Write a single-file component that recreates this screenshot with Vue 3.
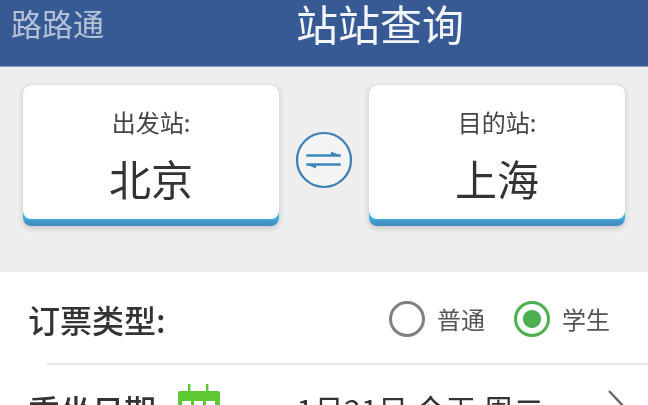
<template>
  <div class="page">
    <header class="topbar">
      <span class="brand">路路通</span>
      <h1 class="title">站站查询</h1>
    </header>

    <section class="stations">
      <div class="station">
        <div class="station-face">
          <span class="station-label">出发站:</span>
          <span class="station-name">北京</span>
        </div>
      </div>
      <button class="swap" aria-label="交换">
        <svg width="58" height="58" viewBox="0 0 58 58" fill="none">
          <circle cx="29" cy="29" r="27" fill="#f4f4f4" stroke="#3b7fb4" stroke-width="2.2" />
          <path d="M12 24H45V25H12Z" fill="#3a86bd" stroke="#3a86bd" stroke-width="1.4" />
          <path d="M36 20.5L45.5 24.5H36Z" fill="#3a86bd" />
          <path d="M12 33H45V34H12Z" fill="#3a86bd" stroke="#3a86bd" stroke-width="1.4" />
          <path d="M21 37.5L11.5 33.5H21Z" fill="#3a86bd" />
        </svg>
      </button>
      <div class="station">
        <div class="station-face">
          <span class="station-label">目的站:</span>
          <span class="station-name">上海</span>
        </div>
      </div>
    </section>

    <section class="panel">
      <div class="row type-row">
        <span class="row-label">订票类型:</span>
        <div class="radios">
          <label
            v-for="t in ticketTypes"
            :key="t"
            class="radio"
            :class="{ checked: selectedType === t }"
            @click="selectedType = t"
          >
            <span class="radio-dot"></span>
            <span class="radio-text">{{ t }}</span>
          </label>
        </div>
      </div>
      <div class="row date-row">
        <span class="row-label">乘坐日期:</span>
        <svg class="calendar" width="44" height="34" viewBox="0 0 44 34">
          <rect x="1" y="7" width="42" height="27" rx="2" fill="#5ec832" />
          <rect x="11" y="0" width="2.4" height="11" fill="#5ec832" />
          <rect x="29" y="0" width="2.4" height="11" fill="#5ec832" />
          <rect x="5" y="17" width="9" height="8" fill="#fff" />
          <rect x="17" y="17" width="9" height="8" fill="#fff" />
          <rect x="29" y="17" width="9" height="8" fill="#fff" />
        </svg>
        <span class="date-value">1月21日 今天 周二</span>
        <svg class="chevron" width="22" height="40" viewBox="0 0 22 40" fill="none">
          <path d="M3 2L20 20L3 38" stroke="#666" stroke-width="2.4" />
        </svg>
      </div>
    </section>
  </div>
</template>

<script setup>
import { ref } from 'vue'

const ticketTypes = ['普通', '学生']
const selectedType = ref('学生')
</script>

<style scoped>
.page {
  width: 648px;
  height: 405px;
  overflow: hidden;
  background: #eeeeee;
  font-family: "Noto Sans CJK SC", "Noto Sans", sans-serif;
  color: #333;
  filter: blur(0.6px);
}

.topbar {
  height: 67px;
  background: #385a94;
  border-bottom: 1px solid #8a9db8;
  box-sizing: border-box;
  display: flex;
  align-items: center;
  padding: 0 0 20px 11px;
  gap: 192px;
}

.brand {
  font-size: 31px;
  line-height: 40px;
  color: #b4c2d8;
}

.title {
  margin: 0;
  font-size: 42px;
  line-height: 46px;
  font-weight: 400;
  color: #f2f5fa;
}

.stations {
  height: 205px;
  box-sizing: border-box;
  padding: 18px 23px 0;
  display: flex;
  align-items: flex-start;
  justify-content: space-between;
}

.station {
  width: 256px;
  height: 141px;
  border-radius: 8px;
  background: linear-gradient(#3fb0e2 0 134px, #4392c2 137px);
  box-shadow: 0 2px 6px rgba(0, 0, 0, 0.18);
}

.station-face {
  height: 134px;
  background: #fff;
  border-radius: 8px;
  display: flex;
  flex-direction: column;
  align-items: center;
  padding-top: 20px;
  box-sizing: border-box;
}

.station-label {
  font-size: 24px;
  line-height: 34px;
  color: #444;
}

.station-name {
  font-size: 42px;
  line-height: 58px;
  margin-top: 10px;
  color: #333;
}

.swap {
  margin-top: 46px;
  padding: 0;
  border: none;
  background: none;
  line-height: 0;
}

.panel {
  background: #fff;
  padding-left: 28px;
}

.row {
  display: flex;
  align-items: center;
}

.type-row {
  height: 93px;
  padding-right: 38px;
  justify-content: space-between;
  position: relative;
}

.type-row::after {
  content: "";
  position: absolute;
  left: 19px;
  right: 0;
  bottom: 0;
  height: 2px;
  background: #e6e6e6;
}

.row-label {
  font-size: 32px;
  font-weight: 500;
  color: #333;
}

.radios {
  display: flex;
  gap: 29px;
}

.radio {
  display: flex;
  align-items: center;
  gap: 12px;
}

.radio-dot {
  width: 36px;
  height: 36px;
  box-sizing: border-box;
  border: 3.5px solid #808080;
  border-radius: 50%;
  background: #fff;
}

.radio.checked .radio-dot {
  border-color: #4caf50;
  background: radial-gradient(circle, #4caf50 0 8.5px, #fff 9.5px);
}

.radio-text {
  font-size: 24px;
  color: #555;
}

.date-row {
  height: 88px;
  padding-right: 20px;
}

.calendar {
  margin-left: 11px;
  margin-bottom: 16px;
}

.date-value {
  margin-left: 76px;
  font-size: 30.5px;
  color: #333;
}

.chevron {
  margin-left: auto;
}
</style>
